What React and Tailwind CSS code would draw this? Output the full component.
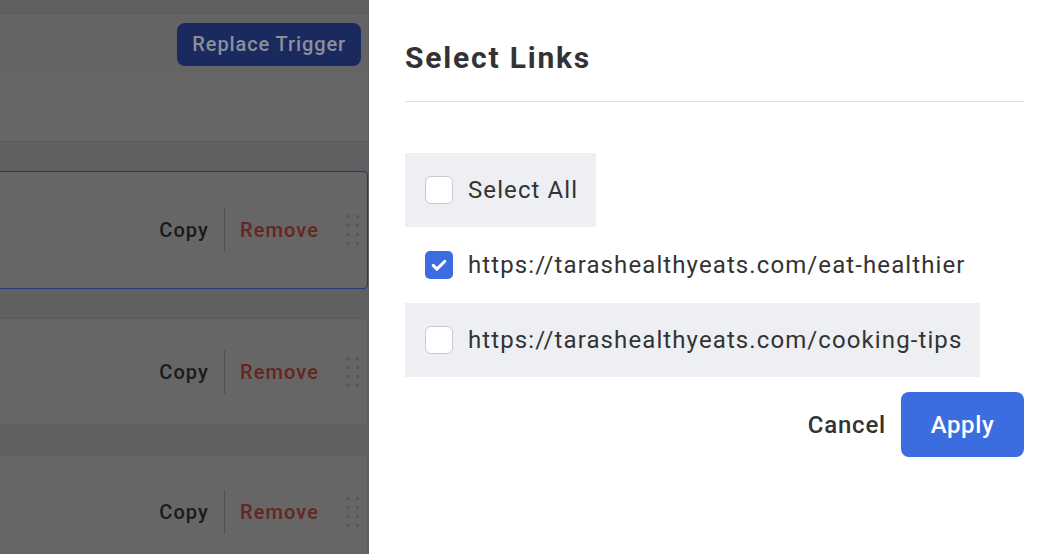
import React from "react";

function Dots() {
  return (
    <div className="grid grid-cols-2 gap-x-[6px] gap-y-[6px]">
      {Array.from({ length: 8 }).map((_, i) => (
        <div key={i} className="w-[3px] h-[3px] bg-[#56575c]" />
      ))}
    </div>
  );
}

function Card({ selected, h }) {
  return (
    <div
      className={`-ml-[10px] mr-px flex shrink-0 items-center justify-end rounded-[4px] bg-[#666666] pr-[8px] border ${
        selected ? "border-[#233a78]" : "border-[#5d5d5f]"
      } ${h}`}
    >
      <span className="text-[20px] font-medium tracking-[1.1px] text-[#1a1a1a]">Copy</span>
      <div className="mx-[15px] h-[44px] w-px bg-[#4f5158]" />
      <span className="text-[20px] font-medium tracking-[1.1px] text-[#652521]">Remove</span>
      <div className="ml-[28px]">
        <Dots />
      </div>
    </div>
  );
}

function Checkbox({ checked }) {
  if (checked) {
    return (
      <div className="flex h-[28px] w-[28px] shrink-0 items-center justify-center rounded-[5px] bg-[#3b6ce0]">
        <svg width="20" height="20" viewBox="0 0 24 24" fill="none" stroke="white" strokeWidth="3.6" strokeLinecap="round" strokeLinejoin="round">
          <path d="M5 12.5l4.5 4.5L19 7.5" />
        </svg>
      </div>
    );
  }
  return <div className="h-[28px] w-[28px] shrink-0 rounded-[6px] border border-[#c9cad6] bg-white" />;
}

function Row({ checked, shaded, children }) {
  return (
    <div className={`inline-flex h-[74px] items-center self-start pl-[20px] pr-[18px] ${shaded ? "bg-[#eeeff3]" : ""}`}>
      <Checkbox checked={checked} />
      <span className="ml-[15px] text-[24px] tracking-[1.1px] text-[#333333]">{children}</span>
    </div>
  );
}

export default function App() {
  return (
    <div className="flex h-[554px] w-[1056px] overflow-hidden" style={{ fontFamily: "Roboto, 'Noto Sans', sans-serif" }}>
      <div className="flex w-[369px] shrink-0 flex-col bg-[#5f6062] pt-[13px]">
        <div className="-ml-[10px] mr-px flex shrink-0 flex-col border-y border-[#5b5b5d]">
          <div className="flex h-[60px] items-center justify-end bg-[#646464] pr-[7px]">
            <div className="flex h-[43px] items-center rounded-[8px] bg-[#1b2a5e] px-[15px] text-[20px] font-medium tracking-[0.9px] text-[#8b8f9c]">
              Replace Trigger
            </div>
          </div>
          <div className="h-[67px] bg-[#666666]" />
        </div>
        <div className="h-[29px] shrink-0" />
        <Card selected h="h-[118px]" />
        <div className="h-[29px] shrink-0" />
        <Card h="h-[107px]" />
        <div className="h-[30px] shrink-0" />
        <Card h="h-[114px]" />
      </div>
      <div className="flex flex-1 flex-col bg-white pl-[36px] pr-[32px] pt-[38px]">
        <h1 className="text-[30px] font-bold leading-[40px] tracking-[1.8px] text-[#333333]">Select Links</h1>
        <div className="mt-[23px] h-px bg-[#dfdfe6]" />
        <div className="mt-[51px] flex flex-col gap-[1px]">
          <Row shaded>Select All</Row>
          <Row checked>https://tarashealthyeats.com/eat-healthier</Row>
          <Row shaded>https://tarashealthyeats.com/cooking-tips</Row>
        </div>
        <div className="mt-[15px] flex items-center justify-end">
          <span className="text-[24px] font-medium tracking-[0.8px] text-[#333333]">Cancel</span>
          <div className="ml-[15px] flex h-[65px] w-[123px] items-center justify-center rounded-[8px] bg-[#3b6ce0] text-[24px] font-medium tracking-[0.6px] text-white">
            Apply
          </div>
        </div>
      </div>
    </div>
  );
}
